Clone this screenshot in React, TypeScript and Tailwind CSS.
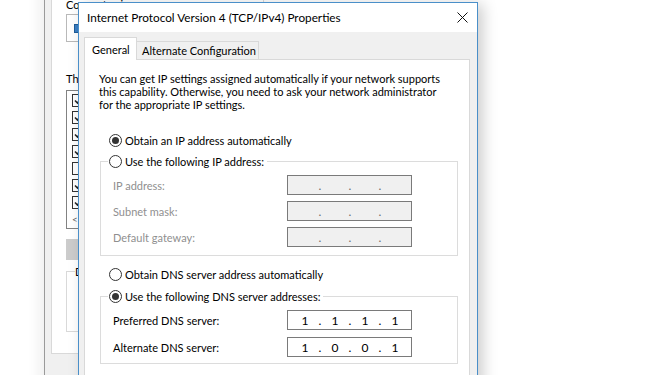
import React from "react";

const font = "font-[family-name:Lato,'Liberation_Sans',sans-serif]";

function Radio({ checked }: { checked?: boolean }) {
  return (
    <span className="w-[13px] h-[13px] rounded-full border border-[#333] bg-white flex items-center justify-center shrink-0">
      {checked && <span className="w-[7px] h-[7px] rounded-full bg-[#333]" />}
    </span>
  );
}

function IpBox({ octets, disabled }: { octets?: string[]; disabled?: boolean }) {
  const vals = octets ?? ["", "", "", ""];
  return (
    <div
      className={`w-[125px] h-[20px] border border-[#7a7a7a] flex items-center pl-[7px] text-[12px] ${
        disabled ? "bg-[#f0f0f0] text-[#6d6d6d]" : "bg-white text-black"
      }`}>
      {vals.map((v, i) => (
        <React.Fragment key={i}>
          {i > 0 && <span className="w-[10px] text-center">.</span>}
          <span className="w-[20px] text-center">{v}</span>
        </React.Fragment>
      ))}
    </div>
  );
}

function FieldRow({ label, children, disabled }: { label: string; children: React.ReactNode; disabled?: boolean }) {
  return (
    <div className="flex items-center h-[20px] pl-[12px]">
      <span className={`w-[174px] whitespace-nowrap ${disabled ? "text-[#8f8f8f]" : "text-black"}`}>{label}</span>
      {children}
    </div>
  );
}

function CheckBox({ checked }: { checked?: boolean }) {
  return (
    <span className="w-[13px] h-[13px] border border-[#333] bg-white flex items-center justify-center shrink-0">
      {checked && (
        <svg width="9" height="9" viewBox="0 0 9 9">
          <path d="M1 4.5 L3.5 7 L8 1.5" stroke="#222" strokeWidth="1.6" fill="none" />
        </svg>
      )}
    </span>
  );
}

function BackWindow() {
  const items = [true, true, true, true, false, true, true];
  return (
    <div className="absolute left-[44px] top-[-60px] w-[220px] h-[500px] border-l border-[#9a9a9a] bg-[#f0f0f0] shadow-[-6px_0_12px_rgba(0,0,0,0.06)]">
      <div className="mt-[20px] ml-[6px] h-[394px] border border-[#d9d9d9] bg-white pl-[14px] pt-[37px] flex flex-col whitespace-nowrap">
        <div className="h-[13px] leading-[13px]">Connect using:</div>
        <div className="mt-[3px] h-[28px] w-[180px] border border-[#b9b9b9] flex items-center pl-[7px]">
          <span className="w-[14px] h-[9px] bg-[#3b7fc4] border border-[#1f5d99]" />
        </div>
        <div className="mt-[30px] h-[13px] leading-[13px]">This connection uses the following items:</div>
        <div className="mt-[5px] h-[139px] w-[180px] border border-[#828282] flex flex-col pt-[1px]">
          {items.map((c, i) => (
            <div key={i} className="h-[17px] flex items-center pl-[5px]">
              <CheckBox checked={c} />
            </div>
          ))}
          <div className="h-[17px] flex items-center pl-[5px] text-[#606060] text-[10px]">&lt;</div>
        </div>
        <div className="mt-[10px] h-[21px] w-[75px] bg-[#cccccc]" />
        <fieldset className="mt-[5px] h-[67px] w-[180px] border border-[#d9d9d9] px-0">
          <legend className="ml-[8px] leading-[13px]">Description</legend>
        </fieldset>
      </div>
    </div>
  );
}

export default function App() {
  return (
    <div className={`relative w-[660px] h-[375px] overflow-hidden bg-white text-[11px] leading-[13px] text-black ${font}`}>
      <BackWindow />
      <div className="absolute left-[78px] top-[2px] w-[400px] h-[420px] border border-[#4a8fc9] bg-[#f0f0f0] shadow-[5px_2px_14px_rgba(0,0,0,0.2)] flex flex-col">
        <div className="h-[29px] bg-white flex items-center justify-between pl-[8px] pr-[9px] shrink-0">
          <span className="text-[11.75px] whitespace-nowrap">Internet Protocol Version 4 (TCP/IPv4) Properties</span>
          <svg width="11" height="11" viewBox="0 0 11 11">
            <path d="M0.5 0.5 L10.5 10.5 M10.5 0.5 L0.5 10.5" stroke="#111" strokeWidth="1" />
          </svg>
        </div>
        <div className="pl-[5px] pr-[7px] pt-[5px] flex-1 flex flex-col">
          <div className="flex items-end h-[22px] relative z-10 whitespace-nowrap">
            <div className="w-[53px] h-[23px] -mb-px bg-white border border-b-0 border-[#d9d9d9] pl-[7px] flex items-center">
              General
            </div>
            <div className="w-[122px] h-[18px] bg-[#f0f0f0] border border-b-0 border-l-0 border-[#d9d9d9] pl-[5px] flex items-center">
              Alternate Configuration
            </div>
          </div>
          <div className="flex-1 bg-white border border-[#d9d9d9] pt-[12px] flex flex-col whitespace-nowrap">
            <p className="pl-[14px] leading-[13px]">
              You can get IP settings assigned automatically if your network supports
              <br />
              this capability. Otherwise, you need to ask your network administrator
              <br />
              for the appropriate IP settings.
            </p>

            <div className="mt-[21px] ml-[24px] h-[16px] flex items-center gap-[3px]">
              <Radio checked />
              <span>Obtain an IP address automatically</span>
            </div>

            <fieldset className="mt-[5px] ml-[15px] mr-[11px] border border-[#dcdcdc] px-0 pb-[8px]">
              <legend className="ml-[7px] pr-[3px]">
                <div className="h-[16px] flex items-center gap-[3px] pl-[1px]">
                  <Radio />
                  <span>Use the following IP address:</span>
                </div>
              </legend>
              <div className="pt-[6px] flex flex-col gap-[6px]">
                <FieldRow label="IP address:" disabled>
                  <IpBox disabled />
                </FieldRow>
                <FieldRow label="Subnet mask:" disabled>
                  <IpBox disabled />
                </FieldRow>
                <FieldRow label="Default gateway:" disabled>
                  <IpBox disabled />
                </FieldRow>
              </div>
            </fieldset>

            <div className="mt-[10px] ml-[24px] h-[16px] flex items-center gap-[3px]">
              <Radio />
              <span>Obtain DNS server address automatically</span>
            </div>

            <fieldset className="mt-[6px] ml-[15px] mr-[11px] border border-[#dcdcdc] px-0 pb-[6px]">
              <legend className="ml-[7px] pr-[3px]">
                <div className="h-[16px] flex items-center gap-[3px] pl-[1px]">
                  <Radio checked />
                  <span>Use the following DNS server addresses:</span>
                </div>
              </legend>
              <div className="pt-[6px] flex flex-col gap-[7px]">
                <FieldRow label="Preferred DNS server:">
                  <IpBox octets={["1", "1", "1", "1"]} />
                </FieldRow>
                <FieldRow label="Alternate DNS server:">
                  <IpBox octets={["1", "0", "0", "1"]} />
                </FieldRow>
              </div>
            </fieldset>
          </div>
        </div>
      </div>
    </div>
  );
}
